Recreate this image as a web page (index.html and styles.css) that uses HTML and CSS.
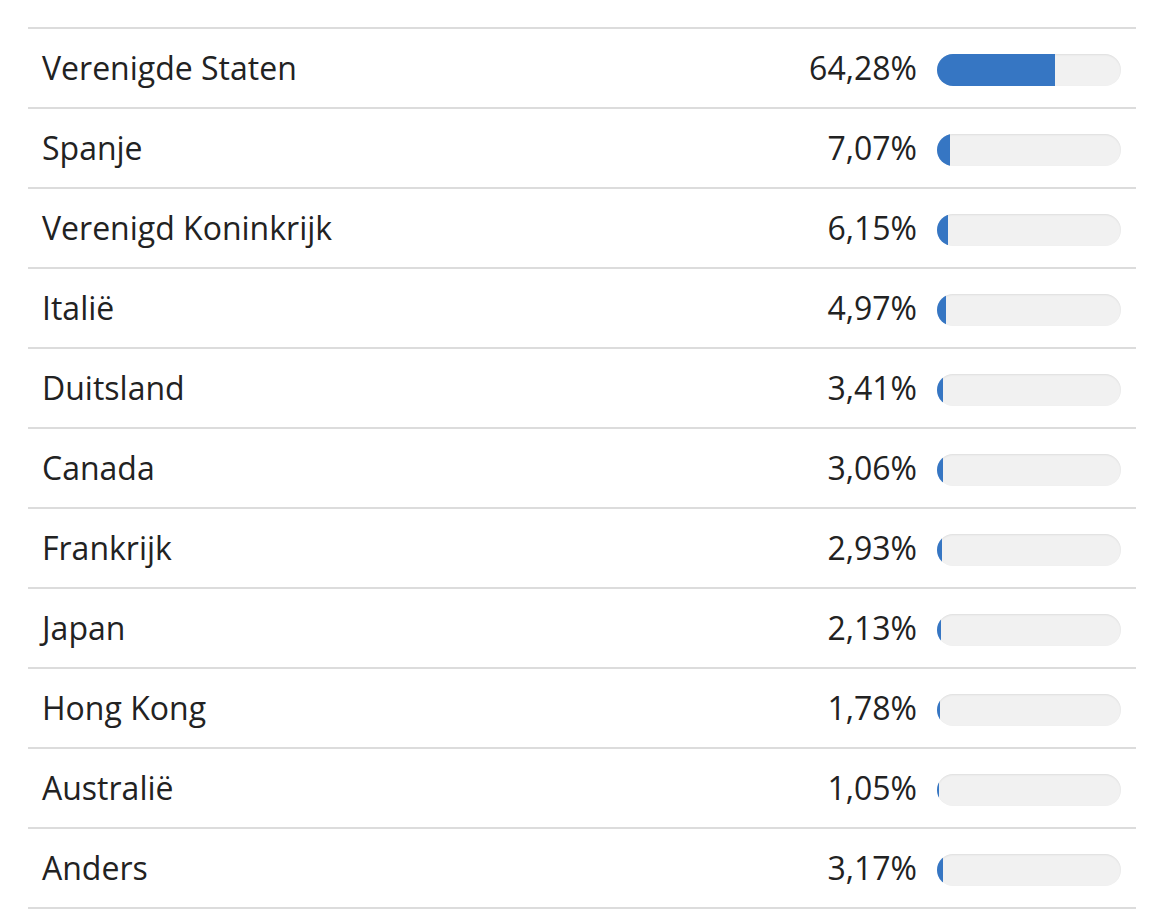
FILE: index.html
```html
<!DOCTYPE html>
<html lang="nl">
<head>
<meta charset="utf-8">
<title>Landen</title>
<link rel="stylesheet" href="styles.css">
</head>
<body>
<div class="list">
  <div class="row"><span class="name">Verenigde Staten</span><span class="pct">64,28%</span><div class="bar"><div class="fill" style="width:64.28%"></div></div></div>
  <div class="row"><span class="name">Spanje</span><span class="pct">7,07%</span><div class="bar"><div class="fill" style="width:7.07%"></div></div></div>
  <div class="row"><span class="name">Verenigd Koninkrijk</span><span class="pct">6,15%</span><div class="bar"><div class="fill" style="width:6.15%"></div></div></div>
  <div class="row"><span class="name">Italië</span><span class="pct">4,97%</span><div class="bar"><div class="fill" style="width:4.97%"></div></div></div>
  <div class="row"><span class="name">Duitsland</span><span class="pct">3,41%</span><div class="bar"><div class="fill" style="width:3.41%"></div></div></div>
  <div class="row"><span class="name">Canada</span><span class="pct">3,06%</span><div class="bar"><div class="fill" style="width:3.06%"></div></div></div>
  <div class="row"><span class="name">Frankrijk</span><span class="pct">2,93%</span><div class="bar"><div class="fill" style="width:2.93%"></div></div></div>
  <div class="row"><span class="name">Japan</span><span class="pct">2,13%</span><div class="bar"><div class="fill" style="width:2.13%"></div></div></div>
  <div class="row"><span class="name">Hong Kong</span><span class="pct">1,78%</span><div class="bar"><div class="fill" style="width:1.78%"></div></div></div>
  <div class="row"><span class="name">Australië</span><span class="pct">1,05%</span><div class="bar"><div class="fill" style="width:1.05%"></div></div></div>
  <div class="row"><span class="name">Anders</span><span class="pct">3,17%</span><div class="bar"><div class="fill" style="width:3.17%"></div></div></div>
</div>
</body>
</html>
```
FILE: styles.css
```css
html, body {
  margin: 0;
  padding: 0;
  background: #fff;
}
body {
  font-family: "Open Sans", "Liberation Sans", sans-serif;
  color: #222;
}
.list {
  margin: 27px 0 0 28px;
  width: 1108px;
  border-bottom: 2px solid #dcdcdc;
}
.row {
  display: flex;
  align-items: center;
  height: 78px;
  border-top: 2px solid #dcdcdc;
  padding: 0 15px 0 14px;
  font-size: 32px;
  line-height: 40px;
}
.name {
  flex: 1;
}
.pct {
  text-align: right;
}
.bar {
  width: 184px;
  height: 32px;
  margin-left: 20px;
  margin-top: 4px;
  border-radius: 16px;
  background: #f1f1f1;
  box-shadow: inset 0 1px 2px rgba(0,0,0,0.08);
  overflow: hidden;
}
.fill {
  height: 100%;
  background: #3676c3;
}
```
